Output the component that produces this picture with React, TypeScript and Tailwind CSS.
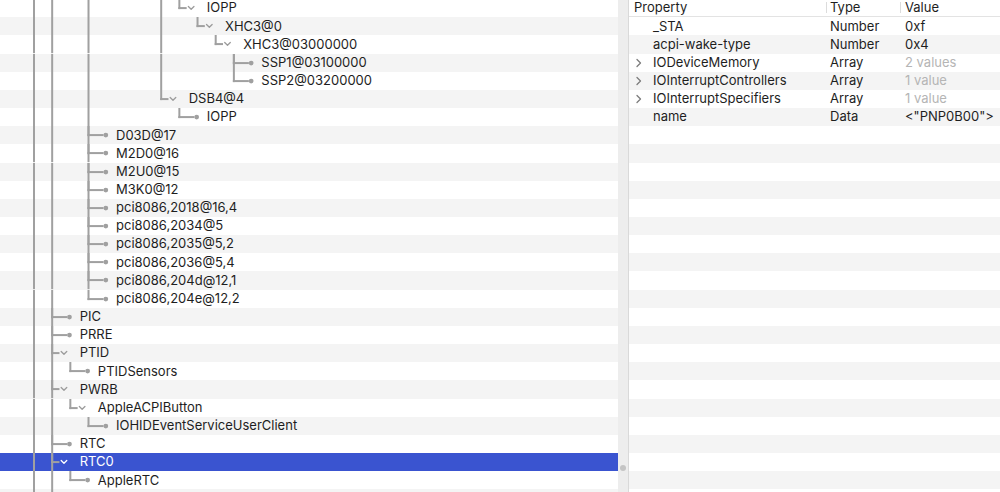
import React from "react";

type Node = {
  label: string;
  k: number;
  kind: "open" | "leaf" | "none";
  pass: number[];
  selected?: boolean;
};

const ROW = 18.17;
const lineX = (k: number) => 34 + 18.17 * k;

const tree: Node[] = [
  { label: "IOPP", k: 8, kind: "open", pass: [0, 1, 3, 7] },
  { label: "XHC3@0", k: 9, kind: "open", pass: [0, 1, 3, 7] },
  { label: "XHC3@03000000", k: 10, kind: "open", pass: [0, 1, 3, 7] },
  { label: "SSP1@03100000", k: 11, kind: "leaf", pass: [0, 1, 3, 7, 11] },
  { label: "SSP2@03200000", k: 11, kind: "leaf", pass: [0, 1, 3, 7] },
  { label: "DSB4@4", k: 7, kind: "open", pass: [0, 1, 3] },
  { label: "IOPP", k: 8, kind: "leaf", pass: [0, 1, 3] },
  { label: "D03D@17", k: 3, kind: "leaf", pass: [0, 1, 3] },
  { label: "M2D0@16", k: 3, kind: "leaf", pass: [0, 1, 3] },
  { label: "M2U0@15", k: 3, kind: "leaf", pass: [0, 1, 3] },
  { label: "M3K0@12", k: 3, kind: "leaf", pass: [0, 1, 3] },
  { label: "pci8086,2018@16,4", k: 3, kind: "leaf", pass: [0, 1, 3] },
  { label: "pci8086,2034@5", k: 3, kind: "leaf", pass: [0, 1, 3] },
  { label: "pci8086,2035@5,2", k: 3, kind: "leaf", pass: [0, 1, 3] },
  { label: "pci8086,2036@5,4", k: 3, kind: "leaf", pass: [0, 1, 3] },
  { label: "pci8086,204d@12,1", k: 3, kind: "leaf", pass: [0, 1, 3] },
  { label: "pci8086,204e@12,2", k: 3, kind: "leaf", pass: [0, 1] },
  { label: "PIC", k: 1, kind: "leaf", pass: [0, 1] },
  { label: "PRRE", k: 1, kind: "leaf", pass: [0, 1] },
  { label: "PTID", k: 1, kind: "open", pass: [0, 1] },
  { label: "PTIDSensors", k: 2, kind: "leaf", pass: [0, 1] },
  { label: "PWRB", k: 1, kind: "open", pass: [0, 1] },
  { label: "AppleACPIButton", k: 2, kind: "open", pass: [0, 1] },
  { label: "IOHIDEventServiceUserClient", k: 3, kind: "leaf", pass: [0, 1] },
  { label: "RTC", k: 1, kind: "leaf", pass: [0, 1] },
  { label: "RTC0", k: 1, kind: "open", pass: [0, 1], selected: true },
  { label: "AppleRTC", k: 2, kind: "leaf", pass: [0, 1] },
  { label: "", k: 1, kind: "none", pass: [0, 1] },
];

const props = [
  { name: "_STA", type: "Number", value: "0xf" },
  { name: "acpi-wake-type", type: "Number", value: "0x4" },
  { name: "IODeviceMemory", type: "Array", value: "2 values", more: true },
  { name: "IOInterruptControllers", type: "Array", value: "1 value", more: true },
  { name: "IOInterruptSpecifiers", type: "Array", value: "1 value", more: true },
  { name: "name", type: "Data", value: '<"PNP0B00">' },
];

const LINE = "#a0a0a0";

function Connector({ node }: { node: Node }) {
  const mid = ROW / 2;
  const x = lineX(node.k);
  const width = x + 27.5;
  return (
    <svg width={width} height={ROW} className="shrink-0">
      {node.pass.map((p) => (
        <rect key={p} x={lineX(p) - 1} y={0} width={2} height={ROW} fill={LINE} />
      ))}
      {node.kind !== "none" && (
        <>
          <rect x={x - 1} y={0} width={2} height={mid + 1} fill={LINE} />
          {node.kind === "leaf" ? (
            <>
              <rect x={x - 1} y={mid - 1} width={16} height={2} fill={LINE} />
              <circle cx={x + 17.3} cy={mid} r={2.4} fill={LINE} />
            </>
          ) : (
            <>
              <rect x={x - 1} y={mid - 1} width={8.3} height={2} fill={LINE} />
              <path
                d={`M${x + 9} ${mid - 1.6} L${x + 11.8} ${mid + 1.2} L${x + 14.6} ${mid - 1.6}`}
                fill="none"
                stroke={node.selected ? "#ffffff" : "#9c9c9c"}
                strokeWidth={1.3}
                strokeLinecap="round"
                strokeLinejoin="round"
              />
            </>
          )}
        </>
      )}
    </svg>
  );
}

function Chevron() {
  return (
    <svg width={8} height={10} viewBox="0 0 8 10" className="shrink-0">
      <path d="M2 1.5 L5.5 5 L2 8.5" fill="none" stroke="#7d7d7d" strokeWidth={1.3} strokeLinecap="round" strokeLinejoin="round" />
    </svg>
  );
}

export default function App() {
  const fillRows = Array.from({ length: 20 }, (_, i) => i);
  return (
    <div
      className="flex h-[492px] w-[1000px] overflow-hidden bg-white text-[13px] text-[#1e1e1e]"
      style={{ fontFamily: "Inter, 'Noto Sans', sans-serif" }}
    >
      {/* outline view */}
      <div className="w-[618px] shrink-0 overflow-hidden">
        <div className="-mt-[0.9px]">
          {tree.map((n, i) => (
            <div
              key={i}
              className={[
                "flex h-[18.17px] items-center whitespace-nowrap",
                n.selected ? "bg-[#3a54d0] text-white" : i % 2 === 1 ? "bg-[#f4f4f4]" : "bg-white",
              ].join(" ")}
            >
              <Connector node={n} />
              <span>{n.label}</span>
            </div>
          ))}
        </div>
      </div>

      {/* scroller */}
      <div className="flex w-[11px] shrink-0 flex-col justify-end border-r border-[#d9d9d9] bg-[#ededed] pb-[21px]">
        <div className="ml-[2px] h-[6px] w-[6px] rounded-full bg-[#c4c4c4]" />
      </div>

      {/* property table */}
      <div className="flex-1 overflow-hidden">
        <div className="-mt-[0.9px]">
          <div className="flex h-[18.17px] items-center whitespace-nowrap border-b border-[#e3e3e3]">
            <div className="w-[197px] shrink-0 pl-[5px]">Property</div>
            <div className="flex w-[74px] shrink-0 items-center">
              <div className="h-[11px] w-px bg-[#dcdcdc]" />
              <span className="pl-[3px]">Type</span>
            </div>
            <div className="flex items-center">
              <div className="h-[11px] w-px bg-[#dcdcdc]" />
              <span className="pl-[4px]">Value</span>
            </div>
          </div>
          {props.map((p, i) => (
            <div
              key={p.name}
              className={[
                "flex h-[18.17px] items-center whitespace-nowrap",
                i % 2 === 1 ? "bg-[#f4f4f4]" : "bg-white",
              ].join(" ")}
            >
              <div className="flex w-[197px] shrink-0 items-center pl-[6px]">
                <div className="w-[18px]">{p.more && <Chevron />}</div>
                <span>{p.name}</span>
              </div>
              <div className="w-[74px] shrink-0 pl-[4px]">{p.type}</div>
              <div className={p.more ? "pl-[5px] text-[#b5b5b5]" : "pl-[5px]"}>{p.value}</div>
            </div>
          ))}
          {fillRows.map((i) => (
            <div
              key={i}
              className={["h-[18.17px]", (i + props.length) % 2 === 1 ? "bg-[#f4f4f4]" : "bg-white"].join(" ")}
            />
          ))}
        </div>
      </div>
    </div>
  );
}
